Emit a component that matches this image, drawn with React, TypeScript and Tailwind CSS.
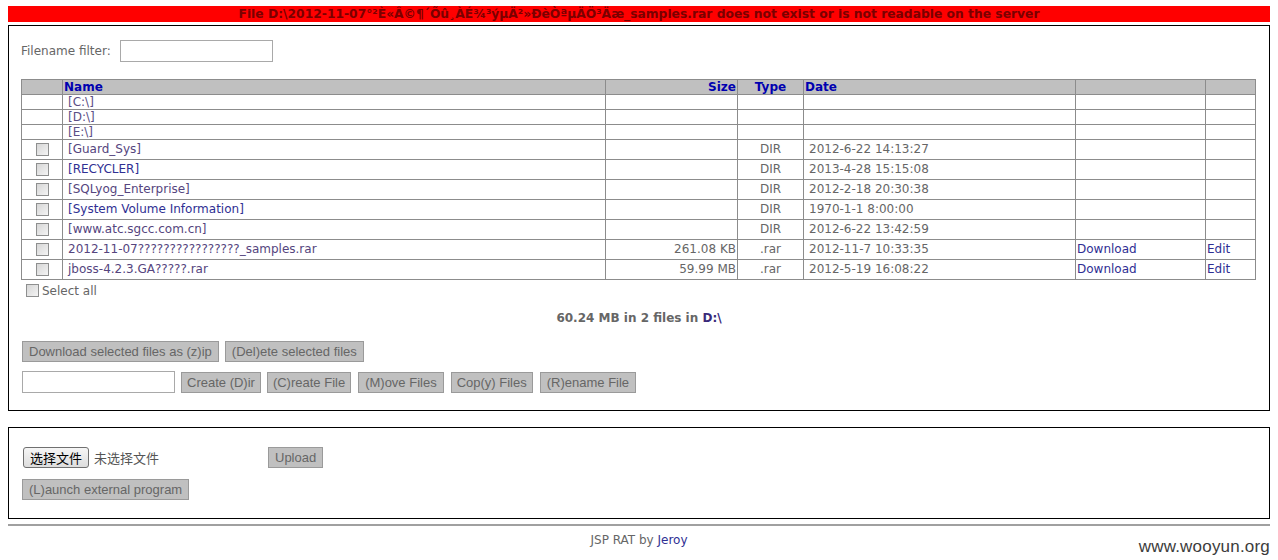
import React from "react";

const Box = () => (
  <span className="inline-block w-[13px] h-[13px] border border-[#8e8f8f] bg-gradient-to-br from-[#d6d6d6] to-[#f4f4f4] align-middle" />
);

const Btn = ({ children, px = "px-[6px]" }: { children: React.ReactNode; px?: string }) => (
  <span
    className={
      "inline-flex items-center h-[21px] bg-[#c0c0c0] border border-[#9a9a9a] text-[#666] text-[13px] leading-none whitespace-nowrap " +
      px
    }
    style={{ fontFamily: "'Liberation Sans', Arial, sans-serif" }}
  >
    {children}
  </span>
);

type Row = {
  name: string;
  color: string;
  size?: string;
  type?: string;
  date?: string;
  dl?: boolean;
  check?: boolean;
  drive?: boolean;
};

const rows: Row[] = [
  { name: "[C:\\]", color: "#5b4e86", drive: true },
  { name: "[D:\\]", color: "#5b4e86", drive: true },
  { name: "[E:\\]", color: "#5b4e86", drive: true },
  { name: "[Guard_Sys]", color: "#55457e", type: "DIR", date: "2012-6-22 14:13:27", check: true },
  { name: "[RECYCLER]", color: "#2f2f93", type: "DIR", date: "2013-4-28 15:15:08", check: true },
  { name: "[SQLyog_Enterprise]", color: "#55457e", type: "DIR", date: "2012-2-18 20:30:38", check: true },
  { name: "[System Volume Information]", color: "#2f2f93", type: "DIR", date: "1970-1-1 8:00:00", check: true },
  { name: "[www.atc.sgcc.com.cn]", color: "#55457e", type: "DIR", date: "2012-6-22 13:42:59", check: true },
  { name: "2012-11-07????????????????_samples.rar", color: "#55457e", size: "261.08 KB", type: ".rar", date: "2012-11-7 10:33:35", dl: true, check: true },
  { name: "jboss-4.2.3.GA?????.rar", color: "#55457e", size: "59.99 MB", type: ".rar", date: "2012-5-19 16:08:22", dl: true, check: true },
];

export default function App() {
  const cell = "border border-[#8c8c8c] p-0";
  return (
    <div
      className="relative w-[1278px] h-[560px] bg-white px-[8px] pt-[6px] text-[12px] text-[#666] overflow-hidden"
      style={{ fontFamily: "'DejaVu Sans', Verdana, sans-serif" }}
    >
      <div className="h-[16px] bg-[#ff0000] text-[#7a0000] font-bold text-[12.3px] leading-[17px] text-center whitespace-nowrap overflow-hidden">
        File D:\2012-11-07°²È«Â©¶´Õû¸ÀÉ¾³ýµÄ²»ÐèÒªµÄÖ³Äæ_samples.rar does not exist or is not readable on the server
      </div>

      <div className="mt-[3px] border border-black pt-[14px] pb-[17px] pl-[12px] pr-[13px]">
        <div className="flex items-center h-[21px]">
          <span className="mr-[9px]">Filename filter:</span>
          <span className="inline-block w-[153px] h-[22px] border border-[#a9a9a9] bg-white" />
        </div>

        <table className="mt-[18px] w-full table-fixed border-collapse border border-[#8c8c8c]">
          <colgroup>
            <col className="w-[41px]" />
            <col className="w-[543px]" />
            <col className="w-[132px]" />
            <col className="w-[66px]" />
            <col className="w-[272px]" />
            <col className="w-[130px]" />
            <col />
          </colgroup>
          <thead>
            <tr className="h-[15px] bg-[#c0c0c0] text-[#0000b0] font-bold leading-[14px]">
              <th className={cell}></th>
              <th className={cell + " text-left pl-[1px]"}>Name</th>
              <th className={cell + " text-right pr-[1px]"}>Size</th>
              <th className={cell + " text-center"}>Type</th>
              <th className={cell + " text-left pl-[1px]"}>Date</th>
              <th className={cell}></th>
              <th className={cell}></th>
            </tr>
          </thead>
          <tbody>
            {rows.map((r, i) => (
              <tr key={i} className={r.drive ? "h-[15px] leading-[14px]" : "h-[20px] leading-[19px]"}>
                <td className={cell + " text-center"}>{r.check && <Box />}</td>
                <td className={cell + " pl-[5px] whitespace-nowrap"} style={{ color: r.color }}>
                  {r.name}
                </td>
                <td className={cell + " text-right pr-[1px]"}>{r.size}</td>
                <td className={cell + " text-center"}>{r.type}</td>
                <td className={cell + " pl-[5px]"}>{r.date}</td>
                <td className={cell + " pl-[1px] text-[#2f2f93]"}>{r.dl ? "Download" : ""}</td>
                <td className={cell + " pl-[1px] text-[#2f2f93]"}>{r.dl ? "Edit" : ""}</td>
              </tr>
            ))}
          </tbody>
        </table>

        <div className="flex items-center h-[21px] pl-[5px]">
          <Box />
          <span className="ml-[3px]">Select all</span>
        </div>

        <div className="mt-[10px] text-center font-bold text-[12px] leading-[15px] -ml-[12px] -mr-[13px]">
          60.24 MB in 2 files in <span className="text-[#3a2a7a]">D:\</span>
        </div>

        <div className="mt-[15px] flex gap-[6px] pl-[1px]">
          <Btn>Download selected files as (z)ip</Btn>
          <Btn>(Del)ete selected files</Btn>
        </div>

        <div className="mt-[9px] flex items-center gap-[6px] pl-[1px]">
          <span className="inline-block w-[153px] h-[22px] border border-[#a9a9a9] bg-white" />
          <Btn px="px-[5px]">Create (D)ir</Btn>
          <Btn px="px-[5px]">(C)reate File</Btn>
          <Btn px="px-[6px] ml-[1px]">(M)ove Files</Btn>
          <Btn px="px-[5px] ml-[1px]">Cop(y) Files</Btn>
          <Btn px="px-[6px] ml-[1px]">(R)ename File</Btn>
        </div>
      </div>

      <div className="mt-[16px] border border-black h-[92px] pt-[19px] pl-[14px]">
        <div className="flex items-center h-[21px]">
          <div className="w-[245px] flex items-center">
            <span
              className="inline-flex items-center h-[21px] px-[6px] border border-[#707070] rounded-[3px] bg-gradient-to-b from-[#f6f6f6] to-[#dddddd] text-black text-[13px] leading-none"
              style={{ fontFamily: "'Noto Sans CJK SC', sans-serif" }}
            >
              选择文件
            </span>
            <span className="ml-[5px] text-[13px] text-[#555]" style={{ fontFamily: "'Noto Sans CJK SC', sans-serif" }}>
              未选择文件
            </span>
          </div>
          <Btn>Upload</Btn>
        </div>
        <div className="mt-[11px] -ml-[1px]">
          <Btn>(L)aunch external program</Btn>
        </div>
      </div>

      <div className="mt-[5px] border-t-2 border-[#a0a0a0]" />

      <div className="mt-[7px] text-center leading-[15px]">
        JSP RAT by <span className="text-[#2f2f93]">Jeroy</span>
      </div>

      <div
        className="absolute right-[8px] bottom-[1px] text-[17px] text-[#3c3c3c] tracking-[0.2px]"
        style={{ fontFamily: "'Liberation Sans', Arial, sans-serif" }}
      >
        www.wooyun.org
      </div>
    </div>
  );
}
